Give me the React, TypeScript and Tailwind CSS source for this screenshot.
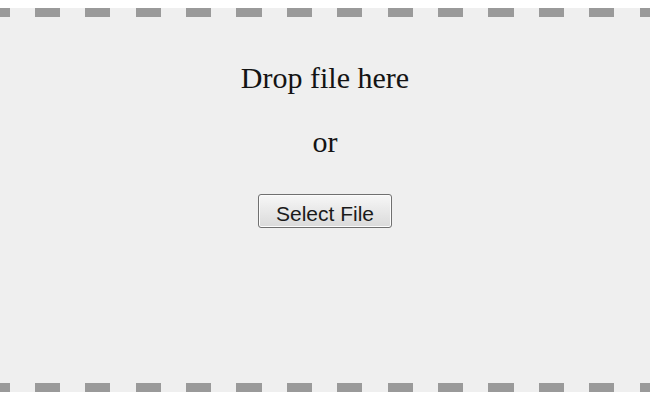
export default function App() {
  return (
    <div className="flex h-[400px] w-[650px] flex-col bg-white py-[8px]">
      <div className="h-[9px] bg-[#efefef] bg-[repeating-linear-gradient(90deg,#9a9a9a_0_9.6px,transparent_9.6px_34.8px,#9a9a9a_34.8px_50.4px)]" />

      <div className="flex flex-1 flex-col items-center bg-[#efefef] pt-[46px] text-[#141414]">
        <p className="font-['Liberation_Serif',serif] text-[30px] leading-none">
          Drop file here
        </p>

        <p className="mt-[34px] font-['Liberation_Serif',serif] text-[30px] leading-none">
          or
        </p>

        <button
          type="button"
          className="mt-[37px] w-[134px] rounded-[3px] border border-[#707070] bg-gradient-to-b from-[#f7f7f7] to-[#dadada] pt-[8px] pb-[3px] font-['Liberation_Sans',Arial,sans-serif] text-[21px] leading-[21px] text-[#1a1a1a] shadow-[inset_0_0_0_1px_#fcfcfc]"
        >
          Select File
        </button>
      </div>

      <div className="h-[9px] bg-[#efefef] bg-[repeating-linear-gradient(90deg,#9a9a9a_0_9.6px,transparent_9.6px_34.8px,#9a9a9a_34.8px_50.4px)]" />
    </div>
  );
}
